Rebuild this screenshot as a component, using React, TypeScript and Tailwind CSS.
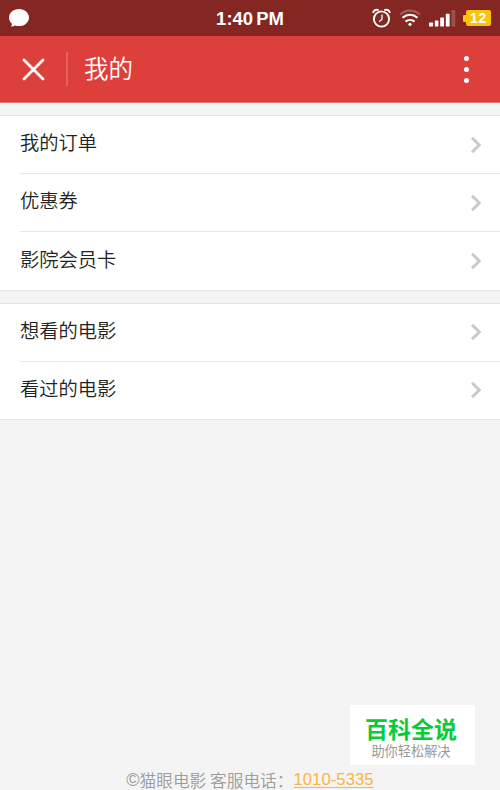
import React from 'react';

const groups = [
  {
    className: 'mt-3 h-[176px]',
    items: ['我的订单', '优惠券', '影院会员卡'],
  },
  {
    className: 'mt-3 h-[117px]',
    items: ['想看的电影', '看过的电影'],
  },
];

const ChatIcon = () => (
  <svg width="22" height="20" viewBox="0 0 22 20" fill="#fff">
    <path d="M11 1C5.300 1 1 4.700 1 9.500c0 2.600 1.100 4.700 2.900 6.200.1 1-.3 1.900-1 2.800 1.700.2 3-.3 4.100-1 1.200.4 2.600.6 4 .6 5.700 0 10-3.800 10-8.600S16.700 1 11 1z" />
  </svg>
);

const AlarmIcon = () => (
  <svg width="20" height="20" viewBox="0 0 20 20" fill="none" stroke="#fff">
    <circle cx="9.500" cy="11" r="7.600" strokeWidth="1.900" />
    <path
      d="M10 7v4.200L7.600 13.300"
      strokeWidth="1.300"
      strokeLinecap="round"
    />
    <path
      d="M1.300 4.200C2 2.400 4 1.400 6 1.900M17.700 4.200C17 2.400 15 1.400 13 1.900"
      strokeWidth="1.900"
      strokeLinecap="round"
    />
  </svg>
);

const WifiIcon = () => (
  <svg width="22" height="18" viewBox="0 0 22 18" fill="none" strokeWidth="2.100">
    <path d="M1 5.600C6.500.3 15.500.3 21 5.600" stroke="#fff" strokeOpacity=".25" />
    <path d="M3.500 8.800C8 4.800 14 4.800 18.500 8.800M6.500 12.600c2.600-2.200 6.400-2.200 9 0" stroke="#fff" />
    <circle cx="11" cy="15.300" r="1.600" fill="#fff" />
  </svg>
);

const SignalIcon = () => (
  <svg width="27" height="17" viewBox="0 0 27 17" fill="#fff">
    <rect x="0" y="12.500" width="4" height="4" rx=".6" />
    <rect x="5.800" y="10.500" width="3.600" height="6" rx=".6" />
    <rect x="11.200" y="7.500" width="3.800" height="9" rx=".6" />
    <rect x="16.800" y="3.800" width="3.800" height="12.700" rx=".6" />
    <rect x="22.500" y="0" width="3.800" height="16.500" rx=".6" opacity=".2" />
  </svg>
);

const StatusBar = () => (
  <div className="relative flex h-9 items-center bg-[#842622] pl-2">
    <ChatIcon />
    <div className="absolute inset-x-0 top-0 text-center font-['Liberation_Sans'] text-[18.500px] leading-[38px] font-bold text-white">
      1:40<span className="ml-[3px]">PM</span>
    </div>
    <div className="ml-auto flex items-center pr-[9px]">
      <AlarmIcon />
      <div className="ml-[7px]">
        <WifiIcon />
      </div>
      <div className="ml-[8px]">
        <SignalIcon />
      </div>
      <div className="ml-[7px] h-[7px] w-[3px] rounded-l-[1px] bg-[#fac30a]" />
      <div className="h-4 w-[25px] rounded-[2px] bg-[#fac30a] text-center font-['Liberation_Sans'] text-[14px] leading-4 font-bold tracking-[.8px] text-white">
        12
      </div>
    </div>
  </div>
);

const Header = () => (
  <div className="flex h-[67px] items-center border-b border-[#e57974] bg-[#dd403b]">
    <svg
      className="ml-[22px]"
      width="23"
      height="23"
      viewBox="0 0 23 23"
      stroke="#fff"
      strokeWidth="2.800"
      strokeLinecap="round"
    >
      <path d="M2 2l19 19M21 2L2 21" />
    </svg>
    <div className="ml-[21px] h-[34px] w-[2px] bg-[#e3635f]" />
    <div className="-mt-[2px] ml-4 text-[24.500px] leading-9 text-white">我的</div>
    <div className="mr-[31px] ml-auto flex flex-col gap-[6px]">
      <div className="size-[5px] rounded-full bg-white" />
      <div className="size-[5px] rounded-full bg-white" />
      <div className="size-[5px] rounded-full bg-white" />
    </div>
  </div>
);

const Row = ({ label }: { label: string }) => (
  <div className="group flex h-[58px] pl-5">
    <div className="flex flex-1 items-center justify-between border-b border-[#e6e6e6] pr-[18px] group-last:border-b-0">
      <span className="-mt-[5px] text-[19.300px] leading-7 text-[#222]">{label}</span>
      <svg
        width="12"
        height="18"
        viewBox="0 0 12 18"
        fill="none"
        stroke="#cacaca"
        strokeWidth="3"
      >
        <path d="M2 1.700L9.300 9 2 16.300" />
      </svg>
    </div>
  </div>
);

const App = () => {
  return (
    <div className="relative flex h-[790px] w-[500px] flex-col overflow-hidden bg-[#f4f4f4] font-['Noto_Sans_CJK_SC',sans-serif] font-[350]">
      <StatusBar />
      <Header />
      {groups.map(({ className, items }) => (
        <div
          key={items[0]}
          className={`flex flex-col border-y border-[#e6e6e6] bg-white ${className}`}
        >
          {items.map((label) => (
            <Row key={label} label={label} />
          ))}
        </div>
      ))}
      <div className="mt-auto flex h-5 items-center justify-center text-[16.700px] leading-5 whitespace-pre text-[#9c9c9c]">
        <span className="font-['Liberation_Sans'] text-[18px]">©</span>猫眼电影 客服电话：
        <a
          className="font-['Liberation_Sans'] text-[16.800px] text-[#fbb544] underline underline-offset-2"
          href="tel:1010-5335"
        >
          1010-5335
        </a>
      </div>
      <div className="absolute top-[705px] left-[350px] flex h-[60px] w-[125px] flex-col items-center bg-white pr-[3px]">
        <div className="mt-2 text-[23px] leading-[31px] font-bold text-[#08cc36]">百科全说</div>
        <div className="text-[13.200px] leading-[13px] font-normal text-[#999]">助你轻松解决</div>
      </div>
    </div>
  );
};

export default App;
